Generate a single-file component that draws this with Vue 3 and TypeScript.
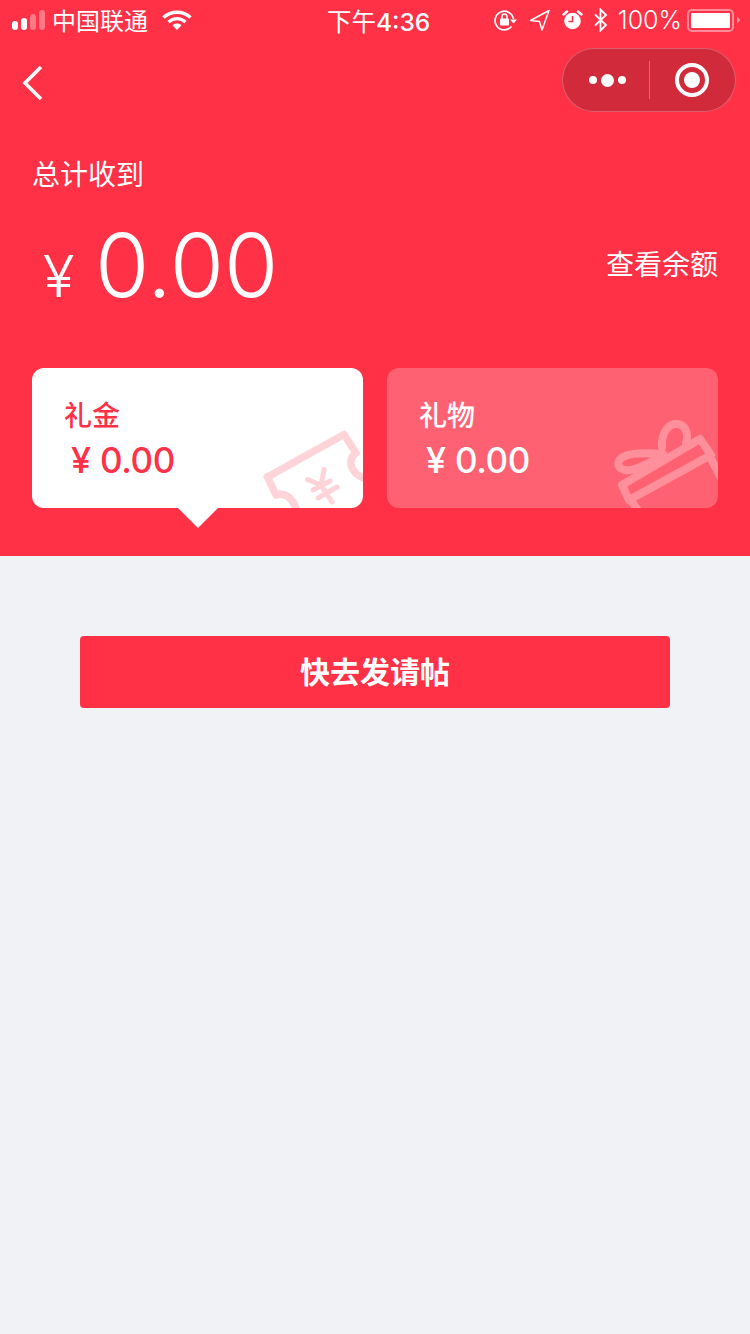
<script setup lang="ts">
const cards = [
  { key: 'cash', title: '礼金', amount: '0.00', active: true },
  { key: 'gift', title: '礼物', amount: '0.00', active: false },
]
</script>

<template>
  <div class="page">
    <header class="hero">
      <div class="status">
        <div class="status-left">
          <div class="signal">
            <i class="on h1"></i><i class="on h2"></i><i class="off h3"></i><i class="off h4"></i>
          </div>
          <span class="carrier">中国联通</span>
          <svg class="wifi" width="30" height="22" viewBox="0 0 30 22">
            <path d="M1.5 8.5C9 1.5 21 1.5 28.5 8.5" fill="none" stroke="#fff" stroke-width="3.4" />
            <path d="M6.5 13C11.5 8.5 18.5 8.5 23.5 13" fill="none" stroke="#fff" stroke-width="3.4" />
            <path d="M10.5 16.2C13 14 17 14 19.5 16.2L15 21Z" fill="#fff" />
          </svg>
        </div>
        <div class="clock"><span class="clock-cjk">下午</span>4:36</div>
        <div class="status-right">
          <svg class="ic-lock" width="24" height="22" viewBox="0 0 24 22">
            <path d="M19.5 10A9.3 9.3 0 1 0 17.5 17.5" fill="none" stroke="#fff" stroke-width="1.7" />
            <path d="M16 10.5h7l-3.5 4z" fill="#fff" />
            <rect x="6" y="9.5" width="9" height="7" rx="1" fill="#fff" />
            <path d="M8 10V7.5a2.5 2.5 0 0 1 5 0V10" fill="none" stroke="#fff" stroke-width="1.6" />
          </svg>
          <svg class="ic-nav" width="22" height="22" viewBox="0 0 22 22">
            <path d="M20 1.5L1.5 11.5L10.5 12.5L13 21Z" fill="none" stroke="#fff" stroke-width="1.5" stroke-linejoin="round" />
          </svg>
          <svg class="ic-alarm" width="22" height="22" viewBox="0 0 22 22">
            <circle cx="10.5" cy="12" r="8.3" fill="#fff" />
            <path d="M10.5 7v5.5H6.5" fill="none" stroke="#fe3146" stroke-width="1.6" />
            <path d="M1.5 5.5L5 2.5M19.5 5.5L16 2.5" stroke="#fff" stroke-width="2.4" stroke-linecap="round" />
          </svg>
          <svg class="ic-bt" width="16" height="24" viewBox="0 0 16 24">
            <path d="M2 6.5L13 17L7.5 22.5V1.5L13 7L2 17.5" fill="none" stroke="#fff" stroke-width="1.8" />
          </svg>
          <span class="percent">100%</span>
          <div class="battery"><b></b></div>
          <i class="battery-tip"></i>
        </div>
      </div>

      <nav class="nav">
        <svg class="back" width="24" height="38" viewBox="0 0 24 38">
          <path d="M20 3L4 19L20 35" fill="none" stroke="#fff" stroke-width="3.6" />
        </svg>
        <div class="capsule">
          <div class="dots"><i></i><i class="big"></i><i></i></div>
          <div class="sep"></div>
          <div class="target"><i></i></div>
        </div>
      </nav>

      <div class="summary">
        <div class="summary-label">总计收到</div>
        <div class="summary-row">
          <div class="total"><span class="yen">¥</span><span class="num">0.00</span></div>
          <span class="balance">查看余额</span>
        </div>
      </div>

      <div class="cards">
        <div v-for="c in cards" :key="c.key" class="card" :class="{ active: c.active }">
          <div class="card-title">{{ c.title }}</div>
          <div class="card-amount"><span class="card-yen">¥</span>{{ c.amount }}</div>
          <svg v-if="c.key === 'cash'" class="deco" width="105" height="83" viewBox="0 0 105 83">
            <g fill="none" stroke="#ffd4d9" stroke-width="7.5" stroke-linecap="round" stroke-linejoin="round">
              <path d="M9.5 52L86 9.5L98 28C90 33 90 48 108 54" />
              <path d="M9.5 52L18 70C26 67 36 72 39 88" />
              <path d="M49.5 54.5L63 60M66 44.5L63 60L74 77M55 65L72 56M60 73L79 62" stroke-width="5" />
            </g>
          </svg>
          <svg v-else class="deco" width="113" height="93" viewBox="0 0 113 93">
            <g fill="none" stroke="#ff8f9a" stroke-width="8" stroke-linecap="round" stroke-linejoin="round">
              <path d="M17 70L95 24L106 40L24 85Z" />
              <path d="M104 40L116 63M26 85L34 97" />
              <path d="M58 39C44 38 27 38 20 41C11 45 11 53 20 55C30 57 46 47 58 40" />
              <path d="M57 32C56 20 62 10 70 9C80 8 84 18 81 28" />
            </g>
          </svg>
          <i v-if="c.active" class="arrow"></i>
        </div>
      </div>
    </header>

    <main class="body">
      <button class="send">快去发请帖</button>
    </main>
  </div>
</template>

<style scoped>
.page {
  width: 750px;
  height: 1334px;
  overflow: hidden;
  display: flex;
  flex-direction: column;
  background: #f1f2f6;
  font-family: "Noto Sans CJK SC", sans-serif;
}
.hero {
  height: 556px;
  box-sizing: border-box;
  background: #fe3146;
  color: #fff;
}
.status {
  height: 40px;
  display: flex;
  align-items: center;
  justify-content: space-between;
  padding: 0 10px 0 12px;
  position: relative;
}
.status-left,
.status-right {
  display: flex;
  align-items: center;
}
.signal {
  display: flex;
  align-items: flex-end;
  gap: 3px;
  width: 33px;
}
.signal i {
  width: 6px;
  border-radius: 3px;
  background: #fff;
}
.signal .off {
  background: rgba(255, 255, 255, 0.35);
}
.h1 { height: 9px; }
.h2 { height: 12px; }
.h3 { height: 16px; }
.h4 { height: 20px; }
.carrier {
  font-size: 24px;
  margin-left: 7px;
  line-height: 38px;
  font-weight: 400;
}
.wifi {
  margin-left: 14px;
}
.clock {
  position: absolute;
  left: 327px;
  top: 1px;
  font-family: Inter, sans-serif;
  font-size: 24.5px;
  line-height: 40px;
  font-weight: 500;
}
.clock-cjk {
  font-family: "Noto Sans CJK SC", sans-serif;
  font-weight: 400;
}
.ic-lock { margin-right: 11px; }
.ic-nav { margin-right: 11px; }
.ic-alarm { margin-right: 9px; }
.ic-bt { margin-right: 9px; }
.percent {
  font-family: Inter, sans-serif;
  font-size: 25px;
  font-weight: 300;
  margin-right: 5px;
}
.battery {
  width: 47px;
  height: 23px;
  box-sizing: border-box;
  border: 2px solid rgba(255, 255, 255, 0.45);
  border-radius: 5px;
  padding: 2px;
}
.battery b {
  display: block;
  height: 100%;
  background: #fff;
  border-radius: 1px;
}
.battery-tip {
  width: 0;
  height: 0;
  margin-left: 3px;
  border-left: 3px solid rgba(255, 255, 255, 0.5);
  border-top: 4px solid transparent;
  border-bottom: 4px solid transparent;
}
.nav {
  height: 88px;
  display: flex;
  align-items: center;
  justify-content: space-between;
  padding: 0 14px 0 21px;
}
.back {
  position: relative;
  top: -1px;
}
.capsule {
  width: 174px;
  height: 64px;
  box-sizing: border-box;
  border: 1px solid rgba(255, 255, 255, 0.25);
  border-radius: 32px;
  background: #d12a3b;
  display: flex;
  align-items: center;
  position: relative;
  top: -4px;
}
.dots {
  width: 86px;
  box-sizing: border-box;
  padding-left: 3px;
  display: flex;
  align-items: center;
  justify-content: center;
  gap: 4px;
}
.dots i {
  width: 8px;
  height: 8px;
  border-radius: 50%;
  background: #fff;
}
.dots .big {
  width: 13px;
  height: 13px;
}
.sep {
  width: 1px;
  height: 38px;
  background: rgba(255, 255, 255, 0.3);
}
.target {
  flex: 1;
  display: flex;
  justify-content: center;
  padding-right: 2px;
}
.target i {
  width: 34px;
  height: 34px;
  box-sizing: border-box;
  border: 4px solid #fff;
  border-radius: 50%;
  position: relative;
}
.target i::after {
  content: "";
  position: absolute;
  inset: 5px;
  border-radius: 50%;
  background: #fff;
}
.summary {
  padding: 0 32px;
}
.summary-label {
  font-size: 28px;
  line-height: 40px;
  font-weight: 400;
  margin-top: 25px;
}
.summary-row {
  display: flex;
  justify-content: space-between;
  align-items: center;
  margin-top: 22px;
  height: 100px;
}
.total {
  display: flex;
  align-items: baseline;
  font-family: Inter, sans-serif;
  font-weight: 300;
}
.yen {
  font-size: 58px;
  width: 63px;
  padding-left: 11px;
  box-sizing: border-box;
}
.num {
  font-size: 88px;
  line-height: 100px;
}
.balance {
  font-size: 28px;
  font-weight: 400;
  position: relative;
  top: -2px;
}
.cards {
  display: flex;
  gap: 24px;
  padding: 0 32px;
  margin-top: 53px;
}
.card {
  flex: 1;
  height: 140px;
  box-sizing: border-box;
  padding: 26px 0 0 32px;
  border-radius: 12px;
  background: rgba(255, 255, 255, 0.24);
  position: relative;
}
.card.active {
  background: #fff;
  color: #fe3146;
}
.card-title {
  font-size: 28px;
  line-height: 40px;
  font-weight: 500;
}
.card-amount {
  font-family: Inter, sans-serif;
  font-size: 35px;
  letter-spacing: -0.4px;
  line-height: 52px;
  font-weight: 500;
  display: flex;
  align-items: baseline;
}
.card-yen {
  font-size: 36px;
  width: 36px;
  padding-left: 7px;
  box-sizing: border-box;
}
.deco {
  position: absolute;
  right: 0;
  bottom: 0;
}
.arrow {
  position: absolute;
  left: 146px;
  bottom: -20px;
  width: 0;
  height: 0;
  border-left: 20px solid transparent;
  border-right: 20px solid transparent;
  border-top: 20px solid #fff;
}
.body {
  flex: 1;
  padding: 80px 80px 0;
}
.send {
  display: block;
  width: 100%;
  height: 72px;
  border: 0;
  border-radius: 4px;
  padding: 0 0 4px;
  background: #fe3146;
  color: #fff;
  font-family: "Noto Sans CJK SC", sans-serif;
  font-size: 30px;
  font-weight: 600;
}
</style>
